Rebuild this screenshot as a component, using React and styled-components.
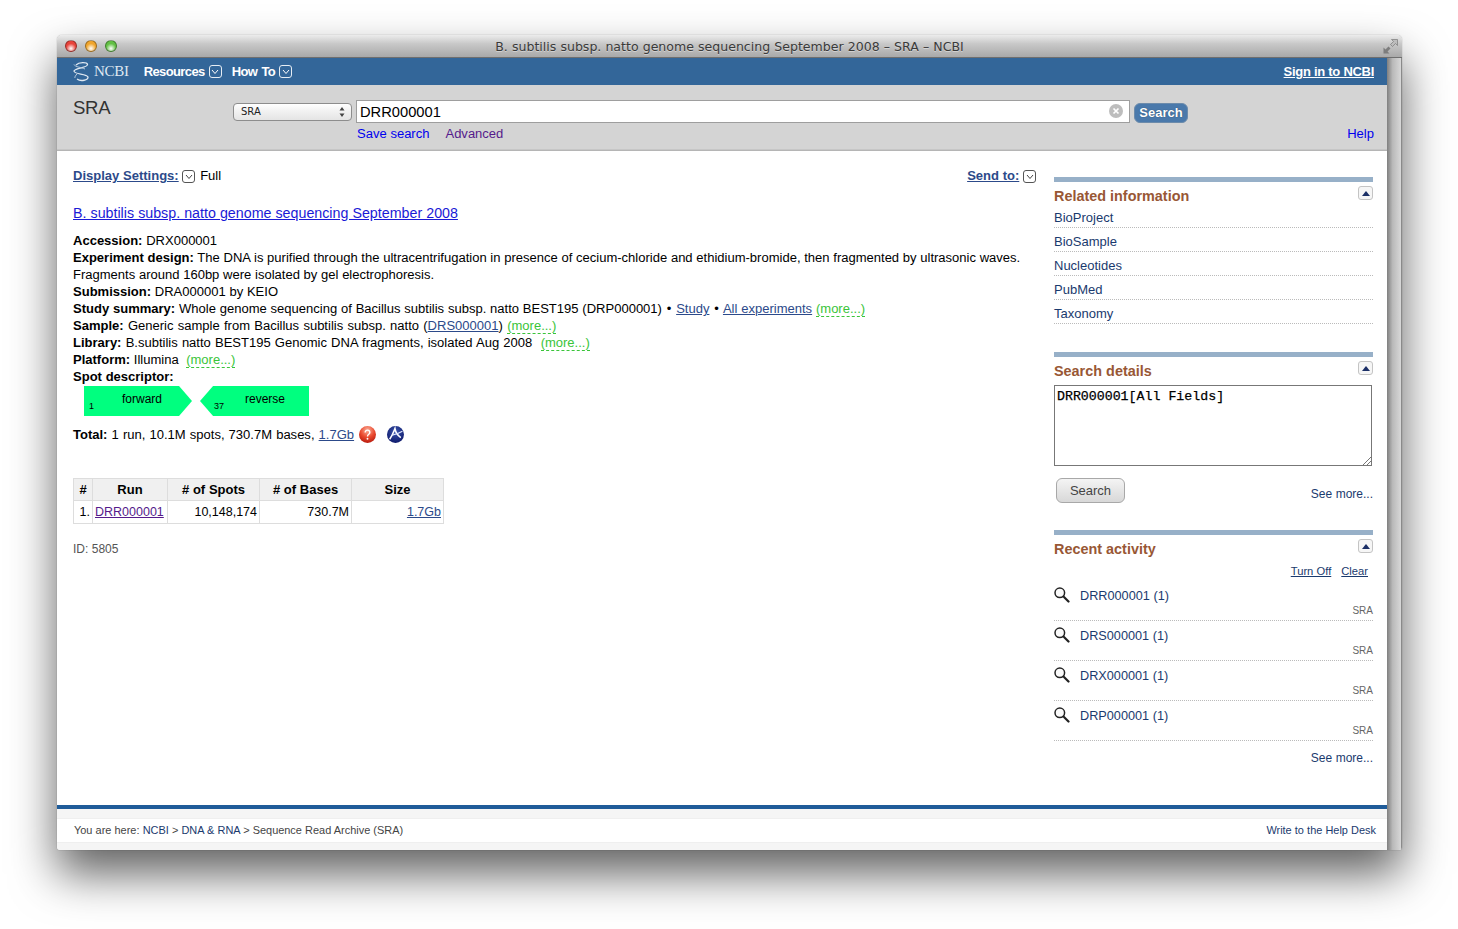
import styled, { createGlobalStyle } from "styled-components";

const GlobalStyle = createGlobalStyle`
  html, body {
    margin: 0;
    padding: 0;
    background: #fff;
  }
  body {
    font-family: "Liberation Sans", Arial, sans-serif;
    font-size: 13.03px;
    word-spacing: 0.1px;
    color: #000;
  }
`;

function Chevron({ light }) {
  return (
    <ChevronBox $light={light}>
      <svg width="8" height="6" viewBox="0 0 8 6">
        <path d="M1 1l3 3.5L7 1" fill="none" stroke={light ? "#fff" : "#444"} strokeWidth="1" />
      </svg>
    </ChevronBox>
  );
}

function Helix() {
  return (
    <svg width="16" height="20" viewBox="0 0 16 20">
      <path d="M3 3C6 0 14 0 14.500 2.500 15 6 2 5.500 1 9c-.5 3.500 13 2.500 14 6 .3 3-7 5-11 2" fill="none" stroke="#dfe8f1" strokeWidth="1.300" />
      <path d="M1 2.500C2 5 9 5.500 12 7M4 12C2.500 13.500 1.500 15 2 16" fill="none" stroke="#b9cbdd" strokeWidth="1" />
    </svg>
  );
}

function Collapse() {
  return (
    <CollapseBox>
      <svg width="8" height="5" viewBox="0 0 8 5">
        <path d="M0 5L4 0l4 5z" fill="#1b2f66" />
      </svg>
    </CollapseBox>
  );
}

function HelpIcon() {
  return (
    <svg width="17" height="17" viewBox="0 0 16 16">
      <defs>
        <radialGradient id="redBall" cx="50%" cy="25%" r="75%">
          <stop offset="0" stopColor="#fbb09c" />
          <stop offset="0.55" stopColor="#ea4a2f" />
          <stop offset="1" stopColor="#b81b0e" />
        </radialGradient>
      </defs>
      <circle cx="8" cy="8" r="8" fill="url(#redBall)" />
      <path d="M5.800 6c0-2.800 4.400-2.800 4.400 0 0 1.800-2.200 1.800-2.200 3.800" fill="none" stroke="#fff" strokeWidth="1.300" />
      <circle cx="8" cy="12" r="0.900" fill="#fff" />
    </svg>
  );
}

function AsperaIcon() {
  return (
    <svg width="17" height="17" viewBox="0 0 16 16">
      <defs>
        <radialGradient id="blueBall" cx="50%" cy="35%" r="70%">
          <stop offset="0" stopColor="#3b56ae" />
          <stop offset="1" stopColor="#0b1566" />
        </radialGradient>
      </defs>
      <circle cx="8" cy="8" r="8" fill="url(#blueBall)" />
      <path d="M2.500 12.500C5 9 6.500 5 7.500 2.500c.5 3 2 6 5.500 8.500" fill="none" stroke="#fff" strokeWidth="1.500" />
      <path d="M5 8.500c3-.3 6-1.500 9.500-3.500" fill="none" stroke="#dfe6ff" strokeWidth="1.200" />
    </svg>
  );
}

function Magnifier() {
  return (
    <MagnifierSvg width="16" height="16" viewBox="0 0 16 16">
      <circle cx="5.800" cy="5.800" r="4.800" fill="#fafafa" stroke="#222" strokeWidth="1.500" />
      <path d="M9.500 9.500l5 5" stroke="#222" strokeWidth="2.200" strokeLinecap="round" />
    </MagnifierSvg>
  );
}

const activity = ["DRR000001 (1)", "DRS000001 (1)", "DRX000001 (1)", "DRP000001 (1)"];
const related = ["BioProject", "BioSample", "Nucleotides", "PubMed", "Taxonomy"];

export default function App() {
  return (
    <>
      <GlobalStyle />
      <Page>
        <Win>
          <TitleBar>
            <Lights>
              <Light $c="#e8433b" />
              <Light $c="#f0a52c" />
              <Light $c="#62c044" />
            </Lights>
            <WinTitle>B. subtilis subsp. natto genome sequencing September 2008 – SRA – NCBI</WinTitle>
            <Resize>
              <svg width="15" height="15" viewBox="0 0 15 15">
                <path d="M8.500 .5h6v6l-2-2-3 3-2-2 3-3z" fill="#bdbdbd" stroke="#7a7a7a" strokeWidth="0.700" />
                <path d="M6.500 14.500h-6v-6l2 2 3-3 2 2-3 3z" fill="#7d7d7d" />
              </svg>
            </Resize>
          </TitleBar>
          <WinBody>
            <Column>
              <NavBar>
                <NavLeft>
                  <Logo>
                    <Helix />
                    <LogoText>NCBI</LogoText>
                  </Logo>
                  <NavItem>Resources <Chevron light /></NavItem>
                  <NavItem>How To <Chevron light /></NavItem>
                </NavLeft>
                <SignIn href="#">Sign in to NCBI</SignIn>
              </NavBar>

              <SearchBar>
                <DbName>SRA</DbName>
                <SearchCol>
                  <SearchRow>
                    <DbSelect>
                      SRA
                      <svg width="6" height="10" viewBox="0 0 6 10">
                        <path d="M3 0l2.500 3.500h-5zM3 10L.5 6.500h5z" fill="#444" />
                      </svg>
                    </DbSelect>
                    <TermBox>
                      DRR000001
                      <ClearX>
                        <svg width="14" height="14" viewBox="0 0 14 14">
                          <circle cx="7" cy="7" r="7" fill="#bdbdbd" />
                          <path d="M4.500 4.500l5 5M9.500 4.500l-5 5" stroke="#fff" strokeWidth="1.700" />
                        </svg>
                      </ClearX>
                    </TermBox>
                    <BlueButton>Search</BlueButton>
                  </SearchRow>
                  <SearchLinks>
                    <SearchLink href="#">Save search</SearchLink>
                    <SearchLink href="#" $visited>Advanced</SearchLink>
                  </SearchLinks>
                </SearchCol>
                <HelpLink href="#">Help</HelpLink>
              </SearchBar>

              <Content>
                <Main>
                  <SettingsRow>
                    <span>
                      <SettingLink href="#">Display Settings:</SettingLink> <Chevron /> Full
                    </span>
                    <span>
                      <SettingLink href="#">Send to:</SettingLink> <Chevron />
                    </span>
                  </SettingsRow>
                  <RecordTitle href="#">B. subtilis subsp. natto genome sequencing September 2008</RecordTitle>
                  <Details>
                    <div><b>Accession:</b> DRX000001</div>
                    <div>
                      <b>Experiment design:</b> The DNA is purified through the ultracentrifugation in presence of
                      cecium-chloride and ethidium-bromide, then fragmented by ultrasonic waves. Fragments around
                      160bp were isolated by gel electrophoresis.
                    </div>
                    <div><b>Submission:</b> DRA000001 by KEIO</div>
                    <Line $spread={0.2}>
                      <b>Study summary:</b> Whole genome sequencing of Bacillus subtilis subsp. natto BEST195
                      (DRP000001) <Bullet>•</Bullet> <DocLink href="#">Study</DocLink> <Bullet>•</Bullet> <DocLink href="#">All experiments</DocLink>{" "}
                      <More>(more...)</More>
                    </Line>
                    <Line $spread={0.65}>
                      <b>Sample:</b> Generic sample from Bacillus subtilis subsp. natto (<DocLink href="#">DRS000001</DocLink>) <More>(more...)</More>
                    </Line>
                    <Line $spread={0.55}>
                      <b>Library:</b> B.subtilis natto BEST195 Genomic DNA fragments, isolated Aug 2008 &nbsp;<More>(more...)</More>
                    </Line>
                    <div><b>Platform:</b> Illumina &nbsp;<More>(more...)</More></div>
                    <div><b>Spot descriptor:</b></div>
                  </Details>
                  <Spots>
                    <Spot $dir="forward">
                      <SpotNum>1</SpotNum>
                      <SpotLabel>forward</SpotLabel>
                    </Spot>
                    <Spot $dir="reverse">
                      <SpotNum $left={14}>37</SpotNum>
                      <SpotLabel $pad={21}>reverse</SpotLabel>
                    </Spot>
                  </Spots>
                  <Total>
                    <Line $spread={0.5}><b>Total:</b> 1 run, 10.1M spots, 730.7M bases, <DocLink href="#">1.7Gb</DocLink></Line>
                    <HelpIcon />
                    <AsperaIcon />
                  </Total>
                  <RunTable>
                    <colgroup>
                      <col width="19" />
                      <col width="75" />
                      <col width="92" />
                      <col width="92" />
                      <col width="92" />
                    </colgroup>
                    <thead>
                      <tr>
                        <Th>#</Th>
                        <Th>Run</Th>
                        <Th># of Spots</Th>
                        <Th># of Bases</Th>
                        <Th>Size</Th>
                      </tr>
                    </thead>
                    <tbody>
                      <tr>
                        <Td>1.</Td>
                        <Td $center><RunLink href="#">DRR000001</RunLink></Td>
                        <Td>10,148,174</Td>
                        <Td>730.7M</Td>
                        <Td><DocLink href="#">1.7Gb</DocLink></Td>
                      </tr>
                    </tbody>
                  </RunTable>
                  <RecordId>ID: 5805</RecordId>
                </Main>

                <Side>
                  <Portlet $h={175}>
                    <PortletHead>Related information<Collapse /></PortletHead>
                    <RelatedList>
                      {related.map((name) => (
                        <RelatedRow key={name}><SideLink href="#">{name}</SideLink></RelatedRow>
                      ))}
                    </RelatedList>
                  </Portlet>
                  <Portlet $h={178}>
                    <PortletHead>Search details<Collapse /></PortletHead>
                    <QueryBox>
                      DRR000001[All Fields]
                      <Grip>
                        <svg width="9" height="9" viewBox="0 0 9 9">
                          <path d="M9 1L1 9M9 5L5 9" stroke="#777" strokeWidth="1" />
                        </svg>
                      </Grip>
                    </QueryBox>
                    <QueryFoot>
                      <GreyButton>Search</GreyButton>
                      <SideLink href="#" $small>See more...</SideLink>
                    </QueryFoot>
                  </Portlet>
                  <Portlet>
                    <PortletHead>Recent activity<Collapse /></PortletHead>
                    <ActivityTools>
                      <ToolLink href="#">Turn Off</ToolLink>
                      <ToolLink href="#">Clear</ToolLink>
                    </ActivityTools>
                    {activity.map((term) => (
                      <ActivityRow key={term}>
                        <ActivityTop>
                          <Magnifier />
                          <ActivityLink href="#">{term}</ActivityLink>
                        </ActivityTop>
                        <ActivityDb>SRA</ActivityDb>
                      </ActivityRow>
                    ))}
                    <ActivityMore><SideLink href="#" $small>See more...</SideLink></ActivityMore>
                  </Portlet>
                </Side>
              </Content>

              <Footer>
                <FooterInner>
                  <span>
                    You are here: <FootLink href="#">NCBI</FootLink> &gt; <FootLink href="#">DNA &amp; RNA</FootLink> &gt; Sequence Read Archive (SRA)
                  </span>
                  <FootLink href="#">Write to the Help Desk</FootLink>
                </FooterInner>
              </Footer>
            </Column>
            <Strip />
          </WinBody>
        </Win>
      </Page>
    </>
  );
}

const Page = styled.div`
  width: 1458px;
  height: 929px;
  padding: 35px 0 0 57px;
  box-sizing: border-box;
  overflow: hidden;
`;

const Win = styled.div`
  width: 1345px;
  height: 815px;
  box-sizing: border-box;
  display: flex;
  flex-direction: column;
  border-radius: 5px 5px 3px 3px;
  background: #fff;
  box-shadow: 0 0 1px rgba(0, 0, 0, 0.5), 0 24px 46px rgba(0, 0, 0, 0.62);
  overflow: hidden;
`;

const TitleBar = styled.div`
  height: 23px;
  flex: none;
  display: flex;
  align-items: center;
  justify-content: center;
  position: relative;
  background: linear-gradient(#ececec, #c8c8c8 40%, #a9a9a9);
  border-bottom: 1px solid #6f6f6f;
  box-sizing: border-box;
`;

const Lights = styled.div`
  position: absolute;
  left: 8px;
  top: 5px;
  display: flex;
  gap: 8px;
`;

const Light = styled.span`
  width: 12px;
  height: 12px;
  border-radius: 50%;
  box-sizing: border-box;
  border: 1px solid rgba(0, 0, 0, 0.35);
  background: radial-gradient(circle at 50% 75%, #fff 0, ${(p) => p.$c} 55%, ${(p) => p.$c} 100%);
`;

const WinTitle = styled.div`
  font-family: "DejaVu Sans", sans-serif;
  font-size: 12.55px;
  color: #3a3a3a;
  text-shadow: 0 1px 0 rgba(255, 255, 255, 0.4);
  white-space: nowrap;
`;

const Resize = styled.span`
  position: absolute;
  right: 4px;
  top: 4px;
  display: flex;
`;

const WinBody = styled.div`
  flex: 1;
  min-height: 0;
  display: flex;
`;

const Column = styled.div`
  width: 1330px;
  flex: none;
  display: flex;
  flex-direction: column;
`;

const Strip = styled.div`
  flex: 1;
  background: linear-gradient(90deg, #7f7f7f, #b9b9b9 40%, #d8d8d8);
  border-right: 1px solid #8a8a8a;
`;

const NavBar = styled.div`
  height: 27px;
  flex: none;
  background: #336699;
  display: flex;
  align-items: center;
  justify-content: space-between;
  padding: 0 13px 0 16px;
`;

const NavLeft = styled.div`
  display: flex;
  align-items: center;
`;

const Logo = styled.div`
  display: flex;
  align-items: center;
  gap: 5px;
  margin-right: 15px;
`;

const LogoText = styled.span`
  font-family: "Liberation Serif", serif;
  font-size: 15px;
  color: #dfe8f1;
  letter-spacing: -0.3px;
`;

const NavItem = styled.span`
  display: flex;
  align-items: center;
  gap: 4px;
  margin-right: 9px;
  color: #fff;
  font-size: 13px;
  font-weight: bold;
  letter-spacing: -0.6px;
  word-spacing: 1px;
`;

const ChevronBox = styled.span`
  display: inline-flex;
  align-items: center;
  justify-content: center;
  width: 13px;
  height: 13px;
  box-sizing: border-box;
  border: 1px solid ${(p) => (p.$light ? "#e6edf4" : "#555")};
  border-radius: 3px;
  vertical-align: text-bottom;
  margin: 0 1px 0 0;
`;

const SignIn = styled.a`
  color: #fff;
  font-weight: bold;
  font-size: 13px;
  letter-spacing: -0.3px;
  text-decoration: underline;
`;

const SearchBar = styled.div`
  height: 66px;
  flex: none;
  box-sizing: border-box;
  background: #d4d4d4;
  border-bottom: 1px solid #b5b5b5;
  box-shadow: inset 0 -1px 0 #c6c6c6;
  display: flex;
  padding: 0 13px 0 16px;
  position: relative;
`;

const DbName = styled.div`
  width: 160px;
  flex: none;
  padding-top: 12px;
  font-size: 18.6px;
  color: #333;
  letter-spacing: -0.3px;
`;

const SearchCol = styled.div`
  padding-top: 15px;
`;

const SearchRow = styled.div`
  display: flex;
  align-items: center;
  gap: 4px;
`;

const DbSelect = styled.div`
  width: 119px;
  height: 18px;
  box-sizing: border-box;
  display: flex;
  align-items: center;
  justify-content: space-between;
  padding: 0 6px 0 7px;
  border: 1px solid #8d8d8d;
  border-radius: 4px;
  background: linear-gradient(#fff, #f0f0f0 50%, #e4e4e4);
  font-family: "DejaVu Sans", sans-serif;
  font-size: 10px;
  color: #222;
`;

const TermBox = styled.div`
  width: 774px;
  height: 23px;
  box-sizing: border-box;
  border: 1px solid #9e9e9e;
  background: #fff;
  padding-left: 3px;
  font-size: 14.7px;
  line-height: 22px;
  position: relative;
`;

const ClearX = styled.span`
  position: absolute;
  right: 6px;
  top: 3px;
  display: flex;
`;

const BlueButton = styled.div`
  width: 54px;
  height: 20px;
  margin-top: 2px;
  box-sizing: border-box;
  border: 1px solid #6c8bab;
  border-radius: 6px;
  background: #4a79ab;
  color: #fff;
  font-weight: bold;
  font-size: 13px;
  line-height: 18px;
  text-align: center;
  text-shadow: 0 0 1px #1d3b5c;
`;

const SearchLinks = styled.div`
  display: flex;
  gap: 16px;
  padding-left: 124px;
  margin-top: 2px;
  line-height: 17px;
`;

const SearchLink = styled.a`
  color: ${(p) => (p.$visited ? "#551a8b" : "#0000ee")};
  text-decoration: none;
`;

const HelpLink = styled.a`
  position: absolute;
  right: 13px;
  top: 40px;
  line-height: 17px;
  color: #0000ee;
  text-decoration: none;
`;

const Content = styled.div`
  flex: 1;
  min-height: 0;
  display: flex;
  padding: 0 14px 0 16px;
  justify-content: space-between;
`;

const Main = styled.div`
  width: 964px;
  padding-top: 16px;
  line-height: 17px;
`;

const SettingsRow = styled.div`
  display: flex;
  justify-content: space-between;
  height: 20px;
`;

const SettingLink = styled.a`
  color: #2c4a8a;
  font-weight: bold;
  text-decoration: underline;
`;

const RecordTitle = styled.a`
  display: block;
  margin-top: 17px;
  font-size: 14.25px;
  line-height: 18px;
  color: #1a1ad6;
  text-decoration: underline;
`;

const Details = styled.div`
  margin-top: 10px;
`;

const Line = styled.div`
  word-spacing: ${(p) => p.$spread}px;
`;

const DocLink = styled.a`
  color: #2c4a8a;
  text-decoration: underline;
`;

const Bullet = styled.span`
  margin: 0 1px;
`;

const RunLink = styled.a`
  color: #551a8b;
  text-decoration: underline;
`;

const More = styled.span`
  color: #3ac43a;
  border-bottom: 1px dashed #3ac43a;
`;

const Spots = styled.div`
  display: flex;
  gap: 8px;
  margin: 1px 0 0 11px;
`;

const Spot = styled.div`
  width: ${(p) => (p.$dir === "forward" ? "108px" : "109px")};
  height: 30px;
  background: #00ff7f;
  font-size: 12px;
  position: relative;
  display: flex;
  justify-content: center;
  clip-path: ${(p) =>
    p.$dir === "forward"
      ? "polygon(0 0, 88% 0, 100% 50%, 88% 100%, 0 100%)"
      : "polygon(12% 0, 100% 0, 100% 100%, 12% 100%, 0 50%)"};
`;

const SpotLabel = styled.span`
  line-height: 26px;
  padding-left: ${(p) => p.$pad ?? 8}px;
`;

const SpotNum = styled.span`
  position: absolute;
  left: ${(p) => p.$left ?? 5}px;
  bottom: 5px;
  font-size: 9px;
  line-height: 10px;
`;

const Total = styled.div`
  display: flex;
  align-items: center;
  gap: 5px;
  margin-top: 9px;
  height: 18px;
  svg:last-child {
    margin-left: 6px;
  }
`;

const RunTable = styled.table`
  margin-top: 35px;
  border-collapse: collapse;
  table-layout: fixed;
  width: 370px;
  font-size: 12.5px;
`;

const Th = styled.th`
  height: 21px;
  padding: 0;
  border: 1px solid #ddd;
  background: #f0f0f0;
  font-size: 13px;
  text-align: center;
`;

const Td = styled.td`
  height: 21px;
  padding: 1px 2px 0;
  border: 1px solid #ddd;
  text-align: ${(p) => (p.$center ? "left" : "right")};
  white-space: nowrap;
`;

const RecordId = styled.div`
  margin-top: 17px;
  font-size: 12px;
  color: #555;
`;

const Side = styled.div`
  width: 319px;
  flex: none;
  padding-top: 26px;
`;

const Portlet = styled.section`
  box-sizing: border-box;
  border-top: 5px solid #97b0c8;
  ${(p) => p.$h && `height: ${p.$h}px;`}
`;

const PortletHead = styled.h3`
  margin: 0;
  padding-top: 6px;
  height: 22px;
  box-sizing: content-box;
  display: flex;
  justify-content: space-between;
  font-size: 14.4px;
  line-height: 17px;
  color: #985735;
  font-weight: bold;
`;

const CollapseBox = styled.span`
  width: 15px;
  height: 14px;
  box-sizing: border-box;
  border: 1px solid #c4c4c4;
  border-radius: 3px;
  background: #f6f6f6;
  display: flex;
  align-items: center;
  justify-content: center;
  margin-top: -2px;
`;

const RelatedList = styled.div`
  margin-top: -6px;
`;

const RelatedRow = styled.div`
  height: 24px;
  box-sizing: border-box;
  border-bottom: 1px dotted #bbb;
  line-height: 28px;
`;

const SideLink = styled.a`
  color: #1a3a6e;
  font-size: ${(p) => (p.$small ? "12px" : "13px")};
  text-decoration: none;
`;

const QueryBox = styled.div`
  width: 318px;
  height: 81px;
  box-sizing: border-box;
  border: 1px solid #777;
  padding: 4px 2px;
  font-family: "Liberation Mono", monospace;
  font-size: 13.25px;
  line-height: 14px;
  -webkit-text-stroke: 0.25px #000;
  position: relative;
`;

const Grip = styled.span`
  position: absolute;
  right: 0;
  bottom: 0;
  display: flex;
`;

const QueryFoot = styled.div`
  display: flex;
  justify-content: space-between;
  align-items: flex-end;
  margin-top: 12px;
  padding-left: 2px;
  a {
    margin-bottom: 2px;
  }
`;

const GreyButton = styled.div`
  width: 69px;
  height: 25px;
  box-sizing: border-box;
  border: 1px solid #a8a8a8;
  border-radius: 6px;
  background: linear-gradient(#f4f4f4, #d8d8d8);
  color: #444;
  font-size: 13px;
  line-height: 23px;
  text-align: center;
`;

const ActivityTools = styled.div`
  display: flex;
  justify-content: flex-end;
  gap: 10px;
  padding-right: 5px;
  height: 18px;
  line-height: 16px;
`;

const ToolLink = styled.a`
  font-size: 11.2px;
  color: #1a3a6e;
  text-decoration: underline;
`;

const ActivityRow = styled.div`
  height: 40px;
  box-sizing: border-box;
  border-bottom: 1px dotted #bbb;
  position: relative;
  padding-top: 6px;
`;

const ActivityTop = styled.div`
  display: flex;
  align-items: center;
  gap: 10px;
  line-height: 17px;
`;

const MagnifierSvg = styled.svg`
  margin-bottom: 2px;
`;

const ActivityLink = styled.a`
  color: #1a3a6e;
  font-size: 12.7px;
  text-decoration: none;
`;

const ActivityDb = styled.div`
  position: absolute;
  right: 0;
  bottom: 3px;
  font-size: 10px;
  line-height: 12px;
  color: #666;
`;

const ActivityMore = styled.div`
  text-align: right;
  margin-top: 9px;
`;

const Footer = styled.div`
  flex: none;
  border-top: 4px solid #1f5c99;
  background: #f5f5f5;
  padding: 9px 0 7px;
`;

const FooterInner = styled.div`
  height: 25px;
  background: #fff;
  border-top: 1px solid #efefef;
  border-bottom: 1px solid #efefef;
  box-sizing: border-box;
  display: flex;
  align-items: center;
  justify-content: space-between;
  padding: 0 11px 2px 17px;
  font-size: 10.95px;
  color: #444;
`;

const FootLink = styled.a`
  color: #1a3a6e;
  text-decoration: none;
`;
